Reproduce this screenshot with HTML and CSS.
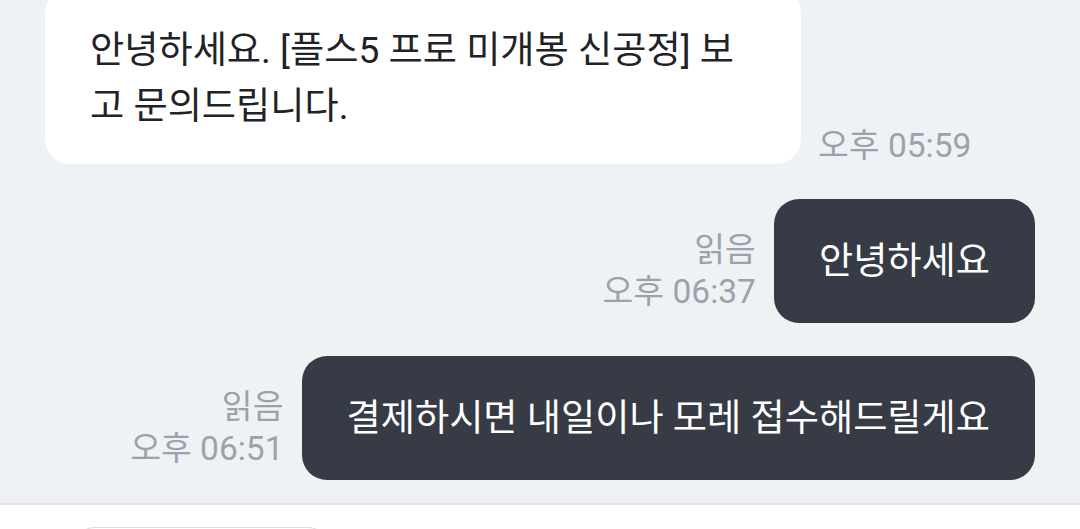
FILE: index.html
```html
<!DOCTYPE html>
<html lang="ko">
<head>
<meta charset="utf-8">
<title>채팅</title>
<link rel="stylesheet" href="styles.css">
</head>
<body>
<div class="app">
  <main class="messages">
    <div class="row received">
      <div class="bubble light">안녕하세요. [플스5 프로 미개봉 신공정] 보고 문의드립니다.</div>
      <div class="meta"><span class="time">오후 05:59</span></div>
    </div>
    <div class="row sent">
      <div class="meta"><span class="read">읽음</span><span class="time">오후 06:37</span></div>
      <div class="bubble dark">안녕하세요</div>
    </div>
    <div class="row sent last">
      <div class="meta"><span class="read">읽음</span><span class="time">오후 06:51</span></div>
      <div class="bubble dark">결제하시면 내일이나 모레 접수해드릴게요</div>
    </div>
  </main>
  <footer class="composer">
    <div class="chip"></div>
  </footer>
</div>
</body>
</html>
```

FILE: styles.css
```css
* {
  box-sizing: border-box;
}

html, body {
  margin: 0;
  padding: 0;
  height: 529px;
  overflow: hidden;
  background: #eff2f5;
  font-family: Roboto, "Noto Sans CJK KR", sans-serif;
}

.app {
  display: flex;
  flex-direction: column;
  height: 529px;
}

.messages {
  flex: none;
  height: 503px;
  overflow: hidden;
  display: flex;
  flex-direction: column;
  justify-content: flex-end;
  padding: 0 45px 23px;
}

.row {
  display: flex;
  align-items: flex-end;
  gap: 17px;
  margin-bottom: 34px;
}

.row.last {
  margin-bottom: 0;
}

.row.received + .row {
  margin-top: 1px;
}

.row.sent {
  justify-content: flex-end;
  gap: 18px;
}

.row.sent + .row.sent {
  margin-top: -1px;
}

.bubble {
  font-size: 37.2px;
  line-height: 56px;
  padding: 34px 45px;
  border-radius: 25px;
  max-width: 756px;
}

.bubble.light {
  flex: none;
  width: 756px;
  background: #ffffff;
  color: #1f2328;
  padding-bottom: 30px;
}

.bubble.dark {
  background: #363b45;
  color: #ffffff;
  white-space: nowrap;
}

.meta {
  display: flex;
  flex-direction: column;
  align-items: flex-end;
  font-size: 33.5px;
  line-height: 42px;
  color: #9ca2ab;
  white-space: nowrap;
}

.row.received .meta {
  margin-bottom: -3px;
}

.row.sent .meta {
  padding-bottom: 10px;
}

.composer {
  flex: 1;
  background: #ffffff;
  border-top: 2px solid #dfe3e8;
  padding: 22px 0 0 73px;
}

.chip {
  width: 257px;
  height: 60px;
  border: 1px solid #d9dee3;
  border-radius: 22px;
  background: #ffffff;
}
```
